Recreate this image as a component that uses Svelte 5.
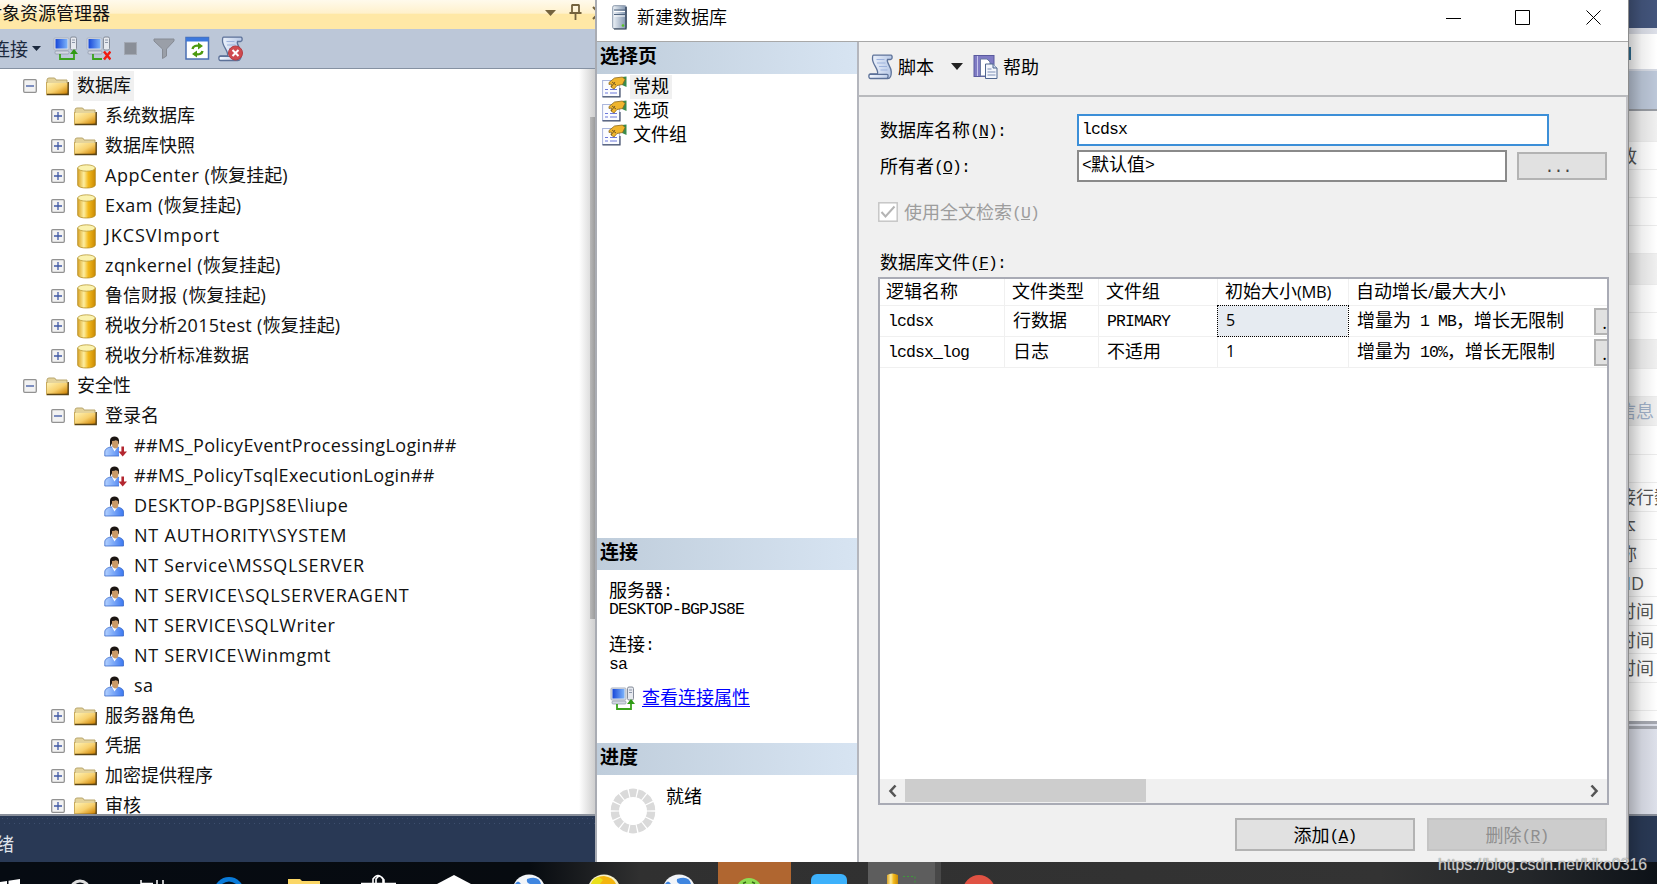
<script lang="ts">
	type Node = { level: number; icon: string; label: string; box?: string; active?: boolean; track?: number };

	const nodes: Node[] = [
		{ level: 0, icon: 'folder', label: '数据库', box: '-', active: true },
		{ level: 1, icon: 'folder', label: '系统数据库', box: '+' },
		{ level: 1, icon: 'folder', label: '数据库快照', box: '+' },
		{ level: 1, icon: 'db', label: 'AppCenter (恢复挂起)', box: '+', track: 0.5 },
		{ level: 1, icon: 'db', label: 'Exam (恢复挂起)', box: '+', track: 0.45 },
		{ level: 1, icon: 'db', label: 'JKCSVImport', box: '+', track: 0.9 },
		{ level: 1, icon: 'db', label: 'zqnkernel (恢复挂起)', box: '+', track: 0.45 },
		{ level: 1, icon: 'db', label: '鲁信财报 (恢复挂起)', box: '+', track: 0.8 },
		{ level: 1, icon: 'db', label: '税收分析2015test (恢复挂起)', box: '+', track: 0.3 },
		{ level: 1, icon: 'db', label: '税收分析标准数据', box: '+' },
		{ level: 0, icon: 'folder', label: '安全性', box: '-' },
		{ level: 1, icon: 'folder', label: '登录名', box: '-' },
		{ level: 2, icon: 'userOff', label: '##MS_PolicyEventProcessingLogin##', track: 0.35 },
		{ level: 2, icon: 'userOff', label: '##MS_PolicyTsqlExecutionLogin##', track: 0.33 },
		{ level: 2, icon: 'user', label: 'DESKTOP-BGPJS8E\\liupe', track: 0.55 },
		{ level: 2, icon: 'user', label: 'NT AUTHORITY\\SYSTEM', track: 0.78 },
		{ level: 2, icon: 'user', label: 'NT Service\\MSSQLSERVER', track: 0.65 },
		{ level: 2, icon: 'user', label: 'NT SERVICE\\SQLSERVERAGENT', track: 0.74 },
		{ level: 2, icon: 'user', label: 'NT SERVICE\\SQLWriter', track: 0.65 },
		{ level: 2, icon: 'user', label: 'NT SERVICE\\Winmgmt', track: 0.7 },
		{ level: 2, icon: 'user', label: 'sa', track: 0.3 },
		{ level: 1, icon: 'folder', label: '服务器角色', box: '+' },
		{ level: 1, icon: 'folder', label: '凭据', box: '+' },
		{ level: 1, icon: 'folder', label: '加密提供程序', box: '+' },
		{ level: 1, icon: 'folder', label: '审核', box: '+' }
	];

	const pages = ['常规', '选项', '文件组'];
	const columns = ['逻辑名称', '文件类型', '文件组', '初始大小(MB)', '自动增长/最大大小'];
	const files = [
		{ name: 'lcdsx', type: '行数据', group: 'PRIMARY', size: '5', growth: '增量为 1 MB，增长无限制' },
		{ name: 'lcdsx_log', type: '日志', group: '不适用', size: '1', growth: '增量为 10%，增长无限制' }
	];

	// rows of the properties window, only their right ends show past the dialog
	const props = [
		{ h: 31, text: '', end: 0, head: true },
		{ h: 28, text: '政', end: 8 },
		{ h: 28, text: '', end: 0 },
		{ h: 28, text: '', end: 0 },
		{ h: 28, text: '', end: 0 },
		{ h: 31, text: '', end: 0, head: true },
		{ h: 28, text: '', end: 0 },
		{ h: 27, text: '', end: 0 },
		{ h: 29, text: '', end: 0, head: true },
		{ h: 28, text: '', end: 0 },
		{ h: 29, text: '信息', end: 25, head: true },
		{ h: 29, text: '', end: 0 },
		{ h: 28, text: '', end: 0 },
		{ h: 29, text: '接行数', end: 43 },
		{ h: 28, text: '本', end: 7 },
		{ h: 29, text: '称', end: 8 },
		{ h: 28, text: 'ID', end: 15 },
		{ h: 29, text: '时间', end: 25 },
		{ h: 28, text: '时间', end: 25 },
		{ h: 29, text: '时间', end: 25 },
		{ h: 28, text: '', end: 0 }
	];

	// latin runs are set in the half-width face
	const runs = (s: string) => s.split(/([\x20-\x7e]+)/).filter((r) => r !== '');
	const isLatin = (s: string) => /^[\x20-\x7e]/.test(s);

	const spokes = Array.from({ length: 14 }, (_, i) => (i * 360) / 14);
</script>

{#snippet mixed(text: string)}{#each runs(text) as r}{#if isLatin(r)}<span class="m">{r}</span>{:else}{r}{/if}{/each}{/snippet}

{#snippet key(k: string)}<span class="m">(<u>{k}</u>)</span>{/snippet}

{#snippet serverIcon(kind: string)}
	<svg class="ic" width="25" height="25" viewBox="0 0 25 25">
		<rect x="1" y="2" width="15" height="12" rx="1" fill="#dfe3ea" stroke="#a9b1c0" />
		<rect x="2.5" y="3" width="12" height="9.5" fill="url(#screen)" />
		<rect x="2" y="15" width="14" height="3" rx="1" fill="#d3d8e2" stroke="#8d97aa" stroke-width=".7" />
		<rect x="17.5" y="1" width="6" height="13" rx="1.5" fill="#e6e9ef" stroke="#858c99" />
		<path d="M19 4h3M19 6.500h3" stroke="#8c96a8" />
		{#if kind === 'on'}
			<path d="M7 18v5h14V14" fill="none" stroke="#3aa31c" stroke-width="1.800" />
			<path d="M17 18l4-5 4 5z" fill="#2f9a14" />
		{:else}
			<path d="M7 18v5h9" fill="none" stroke="#3aa31c" stroke-width="1.800" />
			<path d="M18 15.500l6.500 8M24.500 15.500l-6.500 8" stroke="#f01c10" stroke-width="2.500" />
		{/if}
	</svg>
{/snippet}

{#snippet scrollIcon(stop: boolean)}
	<svg class="ic" width="26" height="26" viewBox="0 0 26 26">
		<path
			d="M5.500 1.200H23c1.500 0 1.700 4.300-.5 4.300H19.500c-1.500 3 3.800 7 3.800 12.500 0 4-1.500 6.500-3.500 6.500H2.500c-2.200 0-2.200-4.500 0-4.500H9.500C11 15.500 4.500 10.500 4.500 5c0-2 .2-3.800 1-3.800z"
			fill="url(#paper)"
			stroke="#5d7299"
			stroke-width="1.300"
		/>
		<path d="M8.500 5.500h8M9 9h8.500M11 12.500h8M12.500 16h7" stroke="#9db2dc" />
		<path d="M2 20.300h17c1.500 0 1.500 3.500 0 4" fill="none" stroke="#5d7299" stroke-width="1.300" />
		{#if stop}
			<circle cx="17.500" cy="17" r="7" fill="#cf4a4f" stroke="#b43c43" />
			<path d="M14.500 14l6 6M20.500 14l-6 6" stroke="#fff" stroke-width="2" />
		{/if}
	</svg>
{/snippet}

{#snippet nodeIcon(name: string)}
	{#if name === 'folder'}
		<svg width="23" height="19" viewBox="0 0 23 19">
			<path d="M1 17V3q0-2 2-2h5q1.500 0 2 2h11v4H1z" fill="#e4d39b" stroke="#b9a76e" />
			<path d="M.5 6h21.500v12H.5z" fill="url(#folder)" />
			<path d="M.5 17.500h21.700V5" fill="none" stroke="#5a4314" stroke-width="1.400" />
			<path d="M.5 18V5" stroke="#c9a95a" />
		</svg>
	{:else if name === 'db'}
		<svg width="19" height="25" viewBox="0 0 19 25">
			<path d="M.7 4v17c0 4 17.600 4 17.600 0V4z" fill="url(#cyl)" stroke="#b48a1f" stroke-width=".8" />
			<ellipse cx="9.500" cy="4" rx="8.800" ry="3.200" fill="#fbf2ae" stroke="#b99b3b" stroke-width=".8" />
		</svg>
	{:else}
		<svg width="23" height="23" viewBox="0 0 23 23">
			<path d="M.8 21v-4c0-3 3-4.500 6-5h6c4 .5 6.700 2 6.700 5v4z" fill="url(#shirt)" stroke="#3b6bc9" stroke-width=".8" />
			<path d="M8 12l2.500 4.500L13.500 12z" fill="#fff" />
			<path d="M6 12V5.500c0-5.500 9-5.500 9 0v4l-3-4-3 1z" fill="#1c1512" />
			<path d="M8 6l5-.5 1.300 1v3.500c0 2-1.300 3.500-3 3.500S8 11.500 8 9.500z" fill="#c99a68" />
			{#if name === 'userOff'}
				<path d="M15 10.500h7.500V22H15z" fill="#fff" />
				<path d="M18.700 11.500v6" stroke="#b3262f" stroke-width="2.600" />
				<path d="M14.500 16.500h8.500l-4.300 5z" fill="#b3262f" />
			{/if}
		</svg>
	{/if}
{/snippet}

<svg class="defs" width="0" height="0">
	<defs>
		<linearGradient id="screen" x2="1"><stop offset="0" stop-color="#1747d8" /><stop offset="1" stop-color="#7db4fb" /></linearGradient>
		<linearGradient id="paper" x2="1"><stop offset="0" stop-color="#f4f8ff" /><stop offset="1" stop-color="#b7c8e6" /></linearGradient>
		<linearGradient id="folder" x2="1" y2="1"><stop offset="0" stop-color="#fff3b4" /><stop offset=".5" stop-color="#f7cf6c" /><stop offset=".85" stop-color="#d48e12" /><stop offset="1" stop-color="#6b4a10" /></linearGradient>
		<linearGradient id="cyl" x2="1"><stop offset="0" stop-color="#d9a326" /><stop offset=".35" stop-color="#fdeea0" /><stop offset=".6" stop-color="#f3b91c" /><stop offset="1" stop-color="#c98a04" /></linearGradient>
		<linearGradient id="shirt" x2="1"><stop offset="0" stop-color="#b4d2ff" /><stop offset="1" stop-color="#3c78f0" /></linearGradient>
		<linearGradient id="box" x2="1"><stop offset="0" stop-color="#eef3f8" /><stop offset="1" stop-color="#7f93ad" /></linearGradient>
	</defs>
</svg>

<div class="screen">
	<div class="desk">
		<section class="explorer">
			<header class="caption">
				<span class="caption-text">对象资源管理器</span>
				<svg width="56" height="20" viewBox="0 0 56 20">
					<path d="M6 8h11l-5.500 6z" fill="#75633d" />
					<path d="M33 2.500v8M40 2.500v8M33 3h7M30.500 11h12M36.500 11v7" fill="none" stroke="#75633d" stroke-width="1.800" />
					<path d="M54 5l6 6-6 6" fill="none" stroke="#75633d" stroke-width="2" />
				</svg>
			</header>
			<div class="tools">
				<span class="tools-text">连接</span>
				<svg class="drop" width="9" height="5" viewBox="0 0 9 5"><path d="M0 0h9L4.500 5z" fill="#1b293e" /></svg>
				{@render serverIcon('on')}
				{@render serverIcon('off')}
				<svg class="ic" width="25" height="25" viewBox="0 0 25 25"><rect x="5.500" y="6.500" width="12" height="12" fill="#8a8f98" stroke="#a3a9b4" /></svg>
				<svg class="ic" width="25" height="25" viewBox="0 0 25 25"><path d="M2 3h20v2l-7.500 8v7l-4 2.500V13L2 5z" fill="#9a9fa8" stroke="#868b94" /></svg>
				<svg class="ic" width="25" height="25" viewBox="0 0 25 25">
					<rect x="1" y="1.500" width="22.500" height="21.500" fill="#fff" stroke="#4a6fb3" stroke-width="1.500" />
					<rect x="1" y="1.500" width="22.500" height="4" fill="#3c78dd" />
					<path d="M7.500 13c.5-3 4-4 7-3M17.500 15c-.5 3-4 4-7 3" fill="none" stroke="#4d9a10" stroke-width="2.400" />
					<path d="M13 6.500l5 3.500-5 3.500zM12 14.500L7 18l5 3.500z" fill="#4d9a10" />
				</svg>
				{@render scrollIcon(true)}
			</div>
			<div class="tree-wrap">
				<div class="tree">
					{#each nodes as n}
						<div class="node level{n.level}">
							{#if n.box}
								<svg class="box" width="14" height="14" viewBox="0 0 14 14">
									<rect x=".7" y=".7" width="12.600" height="12.600" rx="1" fill="#f2f2f2" stroke="#929292" stroke-width="1.300" />
									<path d={n.box === '+' ? 'M3 7h8M7 3v8' : 'M3 7h8'} stroke="#3f58a5" stroke-width="1.300" />
								</svg>
							{/if}
							<span class="pic {n.icon}">{@render nodeIcon(n.icon)}</span>
							<span class="label" class:active={n.active}
								>{#each runs(n.label) as r}{#if isLatin(r)}<span style="letter-spacing: {n.track ?? 0}px">{r}</span>{:else}{r}{/if}{/each}</span
							>
						</div>
					{/each}
				</div>
				<div class="track"><div class="thumb"></div></div>
			</div>
			<footer class="status"><span>就绪</span></footer>
		</section>

		<section class="dialog">
			<header class="title">
				<svg width="15" height="25" viewBox="0 0 15 25">
					<rect x=".7" y=".7" width="13.600" height="23" rx="1.500" fill="url(#box)" stroke="#8b98aa" />
					<path d="M2 5h11M2 9.500h11" stroke="#51657f" stroke-width="1.200" />
					<path d="M2 6.500h11M2 11h11" stroke="#fff" />
					<path d="M14 2v22H2" fill="none" stroke="#26364c" stroke-width="1.200" />
					<circle cx="11" cy="20.500" r="1.300" fill="#57c322" />
				</svg>
				<h1>新建数据库</h1>
				<svg class="winbtns" width="156" height="16" viewBox="0 0 156 16">
					<path d="M0 8.500h15M69.500.5h14v14h-14zM140.500.5l14 14M154.500.5l-14 14" fill="none" stroke="#000" stroke-width="1" />
				</svg>
			</header>

			<div class="body">
				<aside>
					<h2>选择页</h2>
					<ul class="pages">
						{#each pages as p, i}
							<li>
								<svg width="25" height="22" viewBox="0 0 25 22">
									<rect x=".6" y="4.500" width="17" height="16" fill="#fbfcff" stroke="#aab6dc" />
									<path d="M.5 20.800h17.500V12" fill="none" stroke="#44506b" stroke-width="1.200" />
									<path d="M3 13.500h3M3 17h3M8 13.500h7M8 17h7" stroke="#6d79dc" stroke-width="1.200" />
									<path d="M20 1l4.500-.5V11L20 9z" fill="#3a8b4b" />
									<path d="M7 6.500l5.500-4.500 8-1 2.500 2.500-2.500 5-5.500 1-3 3.500-3-2 .5-3-2.500.500z" fill="#f0b52d" stroke="#8b681e" stroke-width=".8" />
									<path d="M10 6l4 3M9 11l4-5" stroke="#7c5f21" />
								</svg>
								<span class:chosen={i === 0}>{p}</span>
							</li>
						{/each}
					</ul>
					<h2>连接</h2>
					<div class="conn">
						<p>服务器<span class="m">:</span></p>
						<p class="val">DESKTOP-BGPJS8E</p>
						<p class="second">连接<span class="m">:</span></p>
						<p class="val">sa</p>
						<div class="link">{@render serverIcon('on')}<span class="a">查看连接属性</span></div>
					</div>
					<h2>进度</h2>
					<div class="progress">
						<svg width="46" height="46" viewBox="-23 -23 46 46">
							{#each spokes as a}
								<path d="M-2.600 -13.700L-4.200 -21.800Q0 -23 4.200 -21.800L2.600 -13.700Q0 -14.500 -2.600 -13.700z" fill="#dadada" transform="rotate({a})" />
							{/each}
						</svg>
						<span>就绪</span>
					</div>
				</aside>

				<main>
					<div class="bar">
						{@render scrollIcon(false)}
						<span>脚本</span>
						<svg class="bar-drop" width="12" height="7" viewBox="0 0 12 7"><path d="M0 0h12L6 7z" fill="#222" /></svg>
						<svg width="26" height="26" viewBox="0 0 26 26">
							<rect x="1" y="1.500" width="20" height="21" fill="#7f7bc4" stroke="#5a5a9e" />
							<path d="M4.500 2v20" stroke="#c7c5ee" />
							<path d="M7.500 5H14l3 3v14H7.500z" fill="#fff" stroke="#6b7aa3" />
							<path d="M12.500 10H20l4 4v10.500H12.500z" fill="#f3f6fc" stroke="#4f668f" />
							<path d="M20 10v4h4" fill="#cdd8ec" stroke="#4f668f" />
							<path d="M14.500 15h4M14.500 18h8M14.500 21h8" stroke="#7d8fb5" />
						</svg>
						<span>帮助</span>
					</div>

					<div class="form">
						<div class="field name">
							<label for="dbname">数据库名称{@render key('N')}<span class="m">:</span></label>
							<div id="dbname" class="input focus">{@render mixed('lcdsx')}</div>
						</div>
						<div class="field owner">
							<label for="dbowner">所有者{@render key('O')}<span class="m">:</span></label>
							<div id="dbowner" class="input">{@render mixed('<默认值>')}</div>
							<button class="browse"><span class="m">...</span></button>
						</div>
						<div class="check">
							<svg width="20" height="20" viewBox="0 0 20 20">
								<rect x=".8" y=".8" width="18.400" height="18.400" fill="#fff" stroke="#c6c6c6" stroke-width="1.500" />
								<path d="M3.500 10l4 4.500 9-10" fill="none" stroke="#b4b4b4" stroke-width="2" />
							</svg>
							<span>使用全文检索{@render key('U')}</span>
						</div>
						<div class="files-label">数据库文件{@render key('F')}<span class="m">:</span></div>

						<div class="grid">
							<div class="row head">
								{#each columns as c}
									<div>{#each runs(c) as r}{#if isLatin(r)}<span class="unit">{r}</span>{:else}{r}{/if}{/each}</div>
								{/each}
							</div>
							{#each files as f, i}
								<div class="row">
									<div>{@render mixed(f.name)}</div>
									<div>{f.type}</div>
									<div>{@render mixed(f.group)}</div>
									<div class="num" class:cell-on={i === 0}>{f.size}</div>
									<div class="growth"><span>{@render mixed(f.growth)}</span><button>.</button></div>
								</div>
							{/each}
							<div class="blank"></div>
							<div class="hscroll">
								<svg width="25" height="24" viewBox="0 0 25 24"><path d="M15.500 6.500L10.500 12l5 5.500" fill="none" stroke="#555" stroke-width="2.600" /></svg>
								<div class="hthumb"></div>
								<svg class="right" width="24" height="24" viewBox="0 0 24 24"><path d="M8.500 6.500l5 5.500-5 5.500" fill="none" stroke="#555" stroke-width="2.600" /></svg>
							</div>
						</div>

						<div class="actions">
							<button>添加{@render key('A')}</button>
							<button class="off">删除{@render key('R')}</button>
						</div>
					</div>
				</main>
			</div>
		</section>

		<section class="behind">
			<div class="navy"></div>
			<div class="combo"><b></b></div>
			<div class="strip"></div>
			{#each props as p}
				<div class="prop" class:head={p.head} style="height: {p.h}px">
					<span style="width: {p.end}px">{p.text}</span>
				</div>
			{/each}
			<div class="desc"></div>
			<div class="foot"></div>
		</section>
	</div>

	<footer class="taskbar">
		<svg width="1657" height="22" viewBox="0 0 1657 22">
			<rect x="718" width="73" height="22" fill="#b06630" />
			<rect x="868" width="67" height="22" fill="#5d5d5d" />
			<rect x="935" width="6" height="22" fill="#484848" />
			<path d="M0 20l7-1v3H0zM8.500 18.800L20 17v5H8.500z" fill="#fff" />
			<circle cx="80" cy="28" r="9" fill="none" stroke="#ddd" stroke-width="3" />
			<path d="M141 18v4M163 18v4M141 21.500h12M157 18v4" stroke="#fff" stroke-width="1.500" fill="none" />
			<circle cx="229" cy="30" r="15" fill="#0a7bd9" />
			<path d="M222 22q7-5 14 0z" fill="#061420" />
			<path d="M288 17h12l2 2h18v3h-32z" fill="#fbd766" />
			<path d="M361 21.500h35M373 21v-4q5-7 10 0v4M376 21v-4q4-6 8 1v3" stroke="#fff" stroke-width="1.600" fill="none" />
			<path d="M437 22l17-9 17 9z" fill="#fff" />
			<g fill="#f2f5f9"><circle cx="529" cy="29" r="16.500" /><circle cx="679" cy="29" r="16.500" /></g>
			<g fill="#3f86e0"><path d="M527 17q12-4 14 5h-11q-4-1-3-5zM515 22q3-5 6 0z" /><path d="M677 17q12-4 14 5h-11q-4-1-3-5zM665 22q3-5 6 0z" /></g>
			<circle cx="604" cy="29" r="16.500" fill="#f5f0c8" />
			<path d="M591 22q4-8 13-8 9 1 12 8z" fill="#f3b50e" />
			<path d="M591 22q2-6 8-7l4 3-3 4z" fill="#e9df1b" />
			<circle cx="749" cy="29" r="13" fill="#8fdc53" />
			<path d="M743 21.500l3-1.500M752 20l3 1.500" stroke="#386c18" stroke-width="1.500" />
			<rect x="811" y="12" width="36" height="20" rx="6" fill="#3db1fb" />
			<path d="M887 13q5-3 11 0v9h-11z" fill="url(#cyl)" />
			<path d="M903 14.500h12v8" fill="none" stroke="#3d9a3a" stroke-dasharray="2 2" />
			<circle cx="979" cy="29" r="16" fill="#e05243" />
		</svg>
	</footer>
	<div class="watermark">https://blog.csdn.net/kiko0316</div>
</div>

<style>
	:global(body) {
		margin: 0;
		overflow: hidden;
	}

	.screen {
		position: relative;
		width: 1657px;
		height: 884px;
		overflow: hidden;
		color: #111;
		font-family: 'Open Sans', 'Noto Sans CJK SC', sans-serif;
		font-size: 18px;
		line-height: 24px;
		white-space: nowrap;
	}

	.screen *,
	.screen {
		box-sizing: border-box;
	}

	.defs {
		position: absolute;
	}

	svg {
		display: block;
		flex: none;
	}

	h1,
	h2,
	p,
	ul {
		margin: 0;
		padding: 0;
		font-weight: normal;
		list-style: none;
	}

	.desk {
		display: flex;
		height: 862px;
	}

	/* object explorer */
	.explorer {
		display: flex;
		flex-direction: column;
		width: 595px;
		overflow: hidden;
		background: #fff;
	}

	.caption {
		display: flex;
		justify-content: space-between;
		height: 29px;
		padding-top: 2px;
		background: linear-gradient(#fffaec 0, #fff1cc 45%, #ffe8a6 50%, #ffe8a6 100%);
	}

	.caption-text {
		margin: -1px 0 0 -16px;
	}

	.tools {
		display: flex;
		align-items: center;
		height: 40px;
		background: #bcc7d8;
		border-bottom: 1px solid #8591a2;
	}

	.tools-text {
		width: 36px;
		margin-left: -8px;
		color: #1b293e;
	}

	.drop {
		margin: 0 12px 0 4px;
	}

	.tools .ic {
		margin-right: 8px;
	}

	.tree-wrap {
		display: flex;
		flex: none;
		height: 747px;
		overflow: hidden;
		border-bottom: 2px solid #8a909b;
	}

	.tree {
		flex: 1;
		padding-top: 2px;
	}

	.node {
		display: flex;
		align-items: center;
		height: 30px;
	}

	.level0 {
		padding-left: 23px;
	}

	.level1 {
		padding-left: 51px;
	}

	.level2 {
		padding-left: 104px;
	}

	.pic {
		width: 23px;
		margin: 0 4px 0 9px;
	}

	.pic.db {
		width: 19px;
		margin: 0 5px 0 12px;
	}

	.pic.user,
	.pic.userOff {
		margin: 0 3px 0 0;
	}

	.label {
		height: 30px;
		padding: 0 4px;
		line-height: 29px;
	}

	.label.active {
		padding: 0 3px 0 4px;
		background: #f0f0f0;
	}

	.track {
		width: 16px;
		padding: 48px 0 0 11px;
		background: linear-gradient(90deg, #fff, #cfcfcf);
	}

	.thumb {
		height: 502px;
		background: linear-gradient(90deg, #b9b9b9, #9c9c9c);
	}

	.status {
		flex: 1;
		padding-top: 16px;
		color: #dfe3ea;
		background:
			radial-gradient(circle, #3d4f6e 0.8px, transparent 1px) 0 0 / 5px 5px repeat-x,
			radial-gradient(circle, #3d4f6e 0.8px, transparent 1px) 2px 5px / 5px 5px repeat-x,
			#293955;
	}

	.status span {
		margin-left: -22px;
	}

	/* dialog */
	.dialog {
		width: 1034px;
		display: flex;
		flex-direction: column;
		color: #000;
		background: #f0f0f0;
		border-left: 2px solid #a9acb3;
		border-right: 1px solid #8c8c8c;
	}

	.title {
		display: flex;
		height: 42px;
		padding: 5px 26px 0 15px;
		background: #fff;
		border-bottom: 1px solid #a8a8a8;
	}

	.title h1 {
		flex: 1;
		margin-left: 10px;
		font-size: 18px;
		line-height: 25px;
		font-weight: 350;
	}

	.winbtns {
		margin-top: 5px;
	}

	.body {
		display: flex;
		height: 820px;
	}

	aside {
		width: 260px;
		background: #fff;
	}

	aside h2 {
		height: 32px;
		padding-left: 3px;
		background: linear-gradient(90deg, #bfcddb, #d7e4f2);
		font-size: 19px;
		font-weight: bold;
		line-height: 28px;
	}

	.pages {
		height: 464px;
		padding-top: 1px;
	}

	.pages li {
		display: flex;
		align-items: center;
		height: 24px;
		padding-left: 5px;
	}

	.pages span {
		height: 24px;
		margin-left: 3px;
		padding: 0 3px;
		line-height: 23px;
	}

	.pages .chosen {
		background: #f0f0f0;
	}

	/* 9px advance, half of a han character */
	.m {
		font-family: 'Liberation Mono', monospace;
		font-size: 16.5px;
		letter-spacing: -0.9px;
		line-height: 0;
		vertical-align: 1px;
		white-space: pre;
	}

	.conn {
		height: 173px;
		padding: 10px 0 0 12px;
	}

	.conn p {
		height: 22px;
		line-height: 20px;
	}

	.conn .val {
		height: 17px;
		font-family: 'Liberation Mono', monospace;
		font-size: 16.5px;
		letter-spacing: -0.9px;
		line-height: 16px;
	}

	.conn .second {
		height: 23px;
		margin-top: 15px;
	}

	.link {
		display: flex;
		align-items: center;
		gap: 7px;
		margin: 12px 0 0 1px;
	}

	.a {
		margin-top: -3px;
		color: #00f;
		text-decoration: underline;
		text-underline-offset: 2px;
	}

	.progress {
		display: flex;
		padding: 13px 0 0 13px;
	}

	.progress span {
		margin: -4px 0 0 10px;
	}

	main {
		flex: 1;
		border-left: 2px solid #b4b6bd;
		background: #f0f0f0;
	}

	.bar {
		display: flex;
		align-items: center;
		height: 55px;
		padding: 0 0 4px 9px;
		border-bottom: 2px solid #b9babd;
	}

	.bar span {
		margin: 1px 0 0 4px;
	}

	.bar-drop {
		margin: 0 10px 0 17px;
	}

	.form {
		height: 765px;
		padding: 17px 0 0 19px;
		border-right: 2px solid #c2c2c6;
	}

	.field {
		display: flex;
		align-items: center;
		height: 32px;
	}

	label {
		width: 199px;
		height: 24px;
		padding-left: 2px;
	}

	.input {
		width: 430px;
		height: 32px;
		padding-left: 3px;
		border: 2px solid #8a8a8a;
		background: #fff;
		line-height: 24px;
	}

	.input.focus {
		width: 472px;
		border-color: #3c8fd8;
	}

	.owner {
		margin-top: 4px;
	}

	button {
		padding: 0;
		border: 2px solid #b3b3b3;
		border-radius: 0;
		background: #e1e1e1;
		color: #000;
		font: inherit;
		line-height: 24px;
	}

	.browse {
		width: 90px;
		height: 28px;
		margin-left: 10px;
		padding-right: 8px;
		color: #444;
	}

	.check {
		display: flex;
		gap: 6px;
		align-items: center;
		height: 24px;
		margin-top: 18px;
		color: #9d9d9d;
	}

	.files-label {
		height: 24px;
		margin: 26px 0 3px 2px;
	}

	.grid {
		display: flex;
		flex-direction: column;
		width: 731px;
		height: 528px;
		border: 2px solid #a9abb5;
		background: #fff;
		overflow: hidden;
	}

	.row {
		display: grid;
		flex: none;
		grid-template-columns: 125px 94px 119px 131px 1fr;
		height: 31px;
		border-bottom: 1px solid #f0f0f0;
		line-height: 28px;
	}

	.row.head {
		height: 27px;
		line-height: 24px;
	}

	.row > div {
		padding-left: 8px;
		border-right: 1px solid #f0f0f0;
	}

	.row.head > div {
		padding-left: 7px;
	}

	.row.head > div:first-child {
		padding-left: 6px;
	}

	.row > div:last-child {
		border-right: 0;
	}

	.unit {
		font-size: 16.5px;
		letter-spacing: -0.3px;
		line-height: 0;
	}

	.num {
		font-size: 16px;
	}

	.row > .cell-on {
		margin-right: 1px;
		outline: 1px dotted #000;
		background: #e6ebf1;
	}

	.growth {
		display: flex;
		justify-content: space-between;
	}

	.growth button {
		width: 15px;
		height: 27px;
		margin: 2px -2px 0 0;
		text-align: right;
		line-height: 22px;
	}

	.blank {
		flex: 1;
	}

	.hscroll {
		display: flex;
		height: 24px;
		background: #f0f0f0;
	}

	.hthumb {
		width: 241px;
		height: 23px;
		background: #cdcdcd;
	}

	.hscroll .right {
		margin-left: auto;
	}

	.actions {
		display: flex;
		justify-content: flex-end;
		gap: 12px;
		padding: 13px 19px 0 0;
	}

	.actions button {
		width: 180px;
		height: 33px;
	}

	.actions .off {
		border-color: #c4c4c4;
		background: #cccccc;
		color: #8f8f8f;
	}

	/* windows behind the dialog */
	.behind {
		position: relative;
		display: flex;
		flex-direction: column;
		width: 28px;
		overflow: hidden;
		background: #fff;
	}

	.behind::after {
		content: '';
		position: absolute;
		inset: 0;
		background: linear-gradient(90deg, rgba(0, 0, 0, 0.24), rgba(0, 0, 0, 0.07) 45%, transparent);
	}

	.behind > div {
		flex: none;
	}

	.navy {
		height: 28px;
		background: #43557c;
	}

	.combo {
		height: 43px;
		padding-top: 13px;
		border-top: 6px solid #dcdfe8;
		border-bottom: 2px solid #d6dae4;
	}

	.combo b {
		display: block;
		width: 2px;
		height: 13px;
		background: #2f6f95;
	}

	.strip {
		height: 40px;
		background: #bcc7d8;
		border-bottom: 2px solid #989ca3;
	}

	.prop {
		display: flex;
		align-items: center;
		border-bottom: 1px solid #ececec;
		color: #555;
	}

	.prop.head {
		background: #f0f0f0;
		color: #9fb0c8;
	}

	.prop span {
		display: flex;
		flex: none;
		justify-content: flex-end;
	}

	.desc {
		height: 95px;
		margin-top: 10px;
		border-top: 8px double #a5a8b0;
		border-bottom: 2px solid #8a909b;
		background: #dde0ea;
	}

	.behind > .foot {
		flex: 1;
		background: #293955;
	}

	.taskbar {
		height: 22px;
		background: linear-gradient(90deg, #060b12 0, #070b10 530px, #303030 640px, #333 1380px, #232629 1530px, #0d1218 1657px);
	}

	.watermark {
		position: absolute;
		right: 10px;
		bottom: 8px;
		color: rgba(225, 225, 225, 0.85);
		font-family: 'Liberation Sans', sans-serif;
		font-size: 15.8px;
		line-height: 22px;
		text-shadow: 0 0 1px #555;
	}
</style>
